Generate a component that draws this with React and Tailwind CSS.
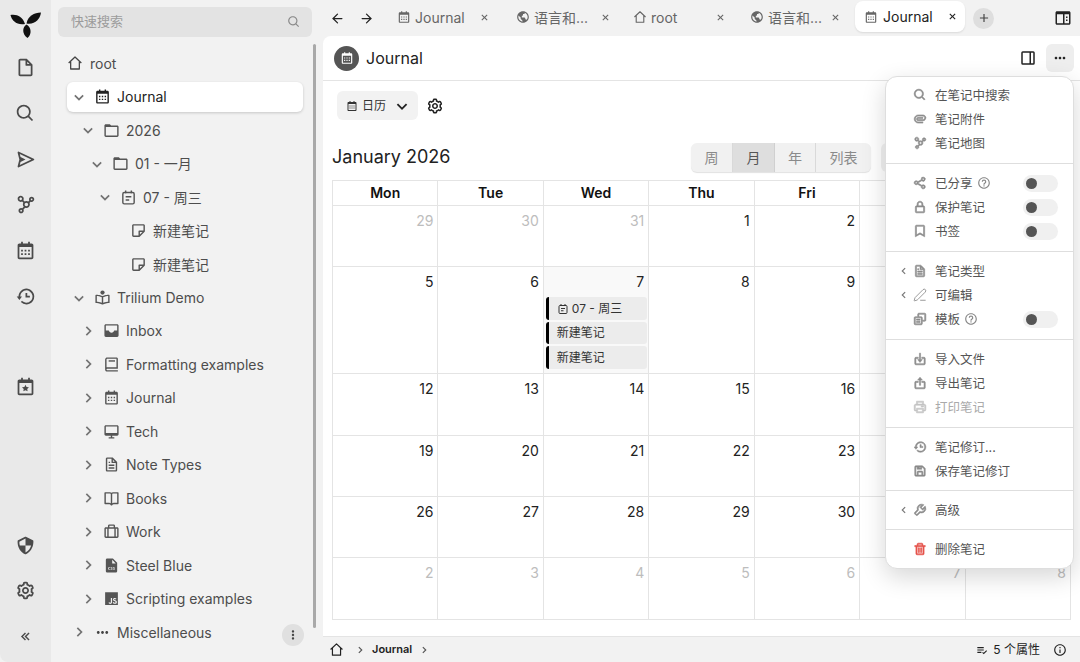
import {
  BiFile, BiSearch, BiSend, BiNetworkChart, BiCalendar, BiHistory, BiCalendarStar, BiShieldQuarter, BiCog, BiChevronsLeft,
  BiChevronDown, BiChevronRight, BiChevronLeft, BiFolder, BiNote, BiBookReader, BiSolidInbox,
  BiBook, BiDesktop, BiFileBlank, BiBookOpen, BiBriefcaseAlt, BiSolidFileCss, BiLogoJavascript, BiDotsHorizontalRounded,
  BiDotsVerticalRounded, BiWorld, BiX, BiPlus, BiSidebar, BiDockRight, BiPaperclip, BiShareAlt, BiLockAlt, BiBookmark,
  BiCopyAlt, BiImport, BiExport, BiPrinter, BiSave, BiWrench, BiTrash, BiHelpCircle, BiInfoCircle, BiListCheck,
} from "react-icons/bi";
import { ArrowLeft, ArrowRight, PenLine } from "lucide-react";

function HomeIcon({ size = 16, className = "" }) {
  return (
    <svg width={size} height={size} viewBox="0 0 24 24" fill="none" stroke="currentColor" strokeWidth="1.9" strokeLinejoin="round" className={className}>
      <path d="M2.5 12 L12 3 L21.5 12 M5.5 10 V21 H18.5 V10" />
    </svg>
  );
}

function DayIcon({ size = 16, className = "" }) {
  return (
    <svg width={size} height={size} viewBox="0 0 24 24" fill="none" stroke="currentColor" strokeWidth="2" className={className}>
      <rect x="4" y="5" width="16" height="16" rx="2" />
      <path d="M8 2 V6 M16 2 V6 M8 11 H16 M8 15.5 H13" />
    </svg>
  );
}

const railTop = [BiFileBlank, BiSearch, BiSend, BiNetworkChart, BiCalendar, BiHistory];

const tree = [
  { level: 0, open: true, icon: BiCalendar, label: "Journal", selected: true },
  { level: 1, open: true, icon: BiFolder, label: "2026" },
  { level: 2, open: true, icon: BiFolder, label: "01 - 一月" },
  { level: 3, open: true, icon: DayIcon, label: "07 - 周三" },
  { level: 4, icon: BiNote, label: "新建笔记", leaf: true },
  { level: 4, icon: BiNote, label: "新建笔记", leaf: true },
  { level: 0, open: true, icon: BiBookReader, label: "Trilium Demo" },
  { level: 1, icon: BiSolidInbox, label: "Inbox" },
  { level: 1, icon: BiBook, label: "Formatting examples" },
  { level: 1, icon: BiCalendar, label: "Journal" },
  { level: 1, icon: BiDesktop, label: "Tech" },
  { level: 1, icon: BiFile, label: "Note Types" },
  { level: 1, icon: BiBookOpen, label: "Books" },
  { level: 1, icon: BiBriefcaseAlt, label: "Work" },
  { level: 1, icon: BiSolidFileCss, label: "Steel Blue" },
  { level: 1, icon: BiLogoJavascript, label: "Scripting examples" },
];

const indents = ["pl-[4px]", "pl-[13px]", "pl-[22px]", "pl-[30px]", "pl-[56px]"];

const tabs = [
  { icon: BiCalendar, label: "Journal", cls: "w-[119px]", inner: "w-[94px]" },
  { icon: BiWorld, label: "语言和...", cls: "w-[117px]", inner: "w-[96px]" },
  { icon: HomeIcon, label: "root", cls: "w-[117px]", inner: "w-[94px]" },
  { icon: BiWorld, label: "语言和...", cls: "w-[105px]", inner: "w-[92px]" },
];

// Sat and Sun labels are hidden by the open menu
const weekdays = ["Mon", "Tue", "Wed", "Thu", "Fri", "", ""];

const days = [
  [29, 30, 31, 1, 2, 3, 4],
  [5, 6, 7, 8, 9, 10, 11],
  [12, 13, 14, 15, 16, 17, 18],
  [19, 20, 21, 22, 23, 24, 25],
  [26, 27, 28, 29, 30, 31, 1],
  [2, 3, 4, 5, 6, 7, 8],
];

const menu = [
  {
    cls: "pt-[6px] pb-[8px]",
    rows: [
      { icon: BiSearch, label: "在笔记中搜索" },
      { icon: BiPaperclip, label: "笔记附件" },
      { icon: BiNetworkChart, label: "笔记地图" },
    ],
  },
  {
    cls: "pt-[7px] pb-[8px] border-t",
    rows: [
      { icon: BiShareAlt, label: "已分享", help: true, toggle: true },
      { icon: BiLockAlt, label: "保护笔记", toggle: true },
      { icon: BiBookmark, label: "书签", toggle: true },
    ],
  },
  {
    cls: "pt-[7px] pb-[8px] border-t",
    rows: [
      { icon: BiFile, label: "笔记类型", sub: true },
      { icon: PenLine, label: "可编辑", sub: true, thin: true },
      { icon: BiCopyAlt, label: "模板", help: true, toggle: true },
    ],
  },
  {
    cls: "pt-[7px] pb-[8px] border-t",
    rows: [
      { icon: BiImport, label: "导入文件" },
      { icon: BiExport, label: "导出笔记" },
      { icon: BiPrinter, label: "打印笔记", disabled: true },
    ],
  },
  {
    cls: "py-[7px] border-t",
    rows: [
      { icon: BiHistory, label: "笔记修订..." },
      { icon: BiSave, label: "保存笔记修订" },
    ],
  },
  { cls: "py-[7px] border-t", rows: [{ icon: BiWrench, label: "高级", sub: true }] },
  { cls: "py-[7px] border-t", rows: [{ icon: BiTrash, label: "删除笔记", danger: true }] },
];

function Logo() {
  return (
    <svg width="32" height="26" viewBox="0 0 32 26" fill="#111">
      <path d="M15 12 C12.5 4.5 7 2 0.5 3 C2 9 7 13.5 15 12 Z" />
      <path d="M16.5 11.5 C18 4 24 0.5 31 0.5 C30 7.5 24.5 13 16.5 11.5 Z" />
      <path d="M16.5 12.5 C12 15.5 12 22 17.5 26 C22 22 21.5 15.5 16.5 12.5 Z" />
    </svg>
  );
}

function Rail() {
  return (
    <aside className="w-[51px] h-full shrink-0 bg-[#e9e9e9] rounded-bl-lg flex flex-col items-center pb-[3px] text-[#4a4a4a]">
      <div className="h-[45px] pt-[12px]">
        <Logo />
      </div>
      {railTop.map((Icon, idx) => (
        <div key={idx} className="h-[45.7px] flex items-center justify-center">
          <Icon size={21} />
        </div>
      ))}
      <div className="h-[45px]" />
      <div className="h-[45px] flex items-center justify-center">
        <BiCalendarStar size={21} />
      </div>
      <div className="mt-auto h-[45.5px] flex items-center justify-center">
        <BiShieldQuarter size={21} />
      </div>
      <div className="h-[45.5px] flex items-center justify-center">
        <BiCog size={21} />
      </div>
      <div className="h-[45.5px] flex items-center justify-center">
        <BiChevronsLeft size={17} />
      </div>
    </aside>
  );
}

function TreeRow({ item }) {
  const Icon = item.icon;
  const Chevron = item.open ? BiChevronDown : BiChevronRight;
  return (
    <div className="h-[33.47px] flex items-center">
      <div
        className={`w-[236px] h-[30px] flex items-center rounded-md ${indents[item.level]} ${
          item.selected ? "bg-white shadow-[0_1px_3px_rgba(0,0,0,0.18)] text-[#222]" : "text-[#4d4d4d]"
        }`}
      >
        {!item.leaf && <Chevron size={20} className="-mx-[2px] text-[#747474] shrink-0" />}
        <Icon size={17} className={`ml-[7px] shrink-0 ${item.selected ? "text-[#222]" : "text-[#555]"}`} />
        <span className="ml-[6px] text-[14px] whitespace-nowrap">{item.label}</span>
      </div>
    </div>
  );
}

function Sidebar() {
  return (
    <section className="w-[272px] h-full shrink-0 flex flex-col">
      <div className="h-[30px] w-[254px] mt-[7px] ml-[7px] rounded-md bg-[#e3e3e3] flex items-center justify-between pl-[13px] pr-[11px]">
        <span className="text-[13px] text-[#9c9c9c]">快速搜索</span>
        <BiSearch size={14} className="text-[#8a8a8a]" />
      </div>
      <div className="flex flex-1 mt-[7px]">
        <div className="w-[262px] pl-[16px] pt-[2.5px]">
          <div className="h-[33.47px] flex items-center text-[#4d4d4d]">
            <HomeIcon size={16} className="text-[#444]" />
            <span className="ml-[7px] text-[14px]">root</span>
          </div>
          {tree.map((item, idx) => (
            <TreeRow key={idx} item={item} />
          ))}
          <div className="h-[33.47px] flex items-center w-[237px] pl-[4px] text-[#4d4d4d]">
            <BiChevronRight size={20} className="-mx-[2px] text-[#747474]" />
            <BiDotsHorizontalRounded size={17} className="ml-[7px] text-[#444]" />
            <span className="ml-[6px] text-[14px]">Miscellaneous</span>
            <span className="ml-auto mt-[5px] w-[22px] h-[22px] rounded-full bg-[#e0e0e0] flex items-center justify-center text-[#444]">
              <BiDotsVerticalRounded size={14} />
            </span>
          </div>
        </div>
        <div className="w-[3px] h-[584px] rounded-full bg-[#a9a9a9]" />
      </div>
    </section>
  );
}

function TabBar() {
  return (
    <div className="h-[36px] shrink-0 flex items-center">
      <ArrowLeft size={15} strokeWidth={2} className="ml-[7px] text-[#222]" />
      <ArrowRight size={15} strokeWidth={2} className="ml-[14px] text-[#222]" />
      <div className="ml-[23px] -mt-[2px] flex items-center">
        {tabs.map((tab, idx) => {
          const Icon = tab.icon;
          return (
            <div key={idx} className={`${tab.cls} flex items-center text-[#666]`}>
              <div className={`${tab.inner} flex items-center`}>
                <Icon size={14} className="shrink-0" />
                <span className="ml-[4px] w-[65px] text-[14px] whitespace-nowrap">{tab.label}</span>
                <BiX size={13} className="ml-auto shrink-0" />
              </div>
            </div>
          );
        })}
      </div>
      <div className="w-[110px] h-[31px] -mt-[3px] rounded-lg bg-white shadow-[0_1px_2px_rgba(0,0,0,0.1)] flex items-center pl-[9px] text-[#222]">
        <BiCalendar size={14} className="text-[#666] shrink-0" />
        <span className="ml-[5px] text-[14px]">Journal</span>
        <BiX size={13} className="ml-[13px]" />
      </div>
      <div className="ml-[8px] w-[21px] h-[21px] rounded-full bg-[#dedede] flex items-center justify-center text-[#444]">
        <BiPlus size={14} />
      </div>
      <BiSidebar size={18} className="ml-[60px] -scale-x-100 text-[#222]" />
    </div>
  );
}

function Calendar() {
  return (
    <div className="mt-[8px] w-[739px] border-l border-t border-[#e4e4e4] grid grid-cols-7 grid-rows-[25px_61px_107px_62px_61px_61px_62px]">
      {weekdays.map((d, idx) => (
        <div key={idx} className="pb-[2px] border-r border-b border-[#e4e4e4] flex items-center justify-center text-[14px] font-semibold text-[#111]">
          {d}
        </div>
      ))}
      {days.map((week, w) =>
        week.map((day, i) => {
          const outside = (w === 0 && day > 20) || w === 5;
          const today = w === 1 && i === 2;
          // Sat/Sun of the first five weeks sit fully under the open menu
          const covered = w < 5 && i > 4;
          return (
            <div
              key={`${w}-${i}`}
              className={`border-r border-b border-[#e4e4e4] ${today ? "bg-[#f9f9f9]" : ""} pl-[2px] pr-[1px] pt-[5px]`}
            >
              {!covered && (
                <div className={`pr-[3px] text-right text-[14px] leading-[20px] ${outside ? "text-[#bdbdbd]" : "text-[#222]"}`}>{day}</div>
              )}
              {today && (
                <div className="mt-[5px] flex flex-col gap-[2px]">
                  <div className="h-[23px] rounded-[3px] bg-[#ececec] border-l-[3px] border-black flex items-center pl-[8px] text-[12px] text-[#333]">
                    <DayIcon size={12} />
                    <span className="ml-[3px]">07 - 周三</span>
                  </div>
                  <div className="h-[22px] rounded-[3px] bg-[#ececec] border-l-[3px] border-black flex items-center pl-[8px] text-[12px] text-[#333]">
                    新建笔记
                  </div>
                  <div className="h-[23px] rounded-[3px] bg-[#ececec] border-l-[3px] border-black flex items-center pl-[8px] text-[12px] text-[#333]">
                    新建笔记
                  </div>
                </div>
              )}
            </div>
          );
        })
      )}
    </div>
  );
}

function NotePane() {
  return (
    <div className="flex-1 min-h-0 bg-white rounded-tl-lg border-b border-[#e4e4e4]">
      <header className="h-[45px] flex items-center pl-[11px] pr-[6px] border-b border-[#e4e4e4]">
        <div className="w-[25px] h-[25px] rounded-full bg-[#555] flex items-center justify-center text-white">
          <BiCalendar size={14} />
        </div>
        <span className="ml-[7px] text-[16px] text-[#222]">Journal</span>
        <BiDockRight size={18} className="ml-auto text-[#222]" />
        <div className="ml-[9px] w-[28px] h-[28px] rounded-md bg-[#eeeeee] flex items-center justify-center text-[#222]">
          <BiDotsHorizontalRounded size={16} />
        </div>
      </header>
      <div className="pl-[9px]">
        <div className="mt-[10px] h-[29px] flex items-center pl-[5px]">
          <div className="w-[81px] h-[29px] rounded-md bg-[#f2f2f2] flex items-center pl-[9px] text-[#333]">
            <BiCalendar size={12} />
            <span className="ml-[4px] text-[12px]">日历</span>
            <BiChevronDown size={22} className="ml-[5px] text-[#222]" />
          </div>
          <BiCog size={18} className="ml-[8px] text-[#222]" />
        </div>
        <div className="mt-[23px] h-[29px] flex items-center">
          <h2 className="pb-[2px] text-[18px] text-[#222] w-[359px]">January 2026</h2>
          <div className="flex h-[29px] rounded-md bg-[#f1f1f1] shadow-[0_1px_1px_rgba(0,0,0,0.12)] text-[14px] text-[#8a8a8a]">
            <div className="w-[42px] flex items-center justify-center border-r border-[#d9d9d9]">周</div>
            <div className="w-[42px] flex items-center justify-center border-r border-[#d0d0d0] bg-[#dedede] text-[#555]">月</div>
            <div className="w-[41px] flex items-center justify-center border-r border-[#d9d9d9]">年</div>
            <div className="w-[55px] flex items-center justify-center">列表</div>
          </div>
          <div className="ml-[10px] w-[40px] h-[29px] rounded-md bg-[#f1f1f1]" />
        </div>
        <Calendar />
      </div>
    </div>
  );
}

function StatusBar() {
  return (
    <footer className="h-[25px] shrink-0 flex items-center pl-[6px] pr-[13px] text-[#222]">
      <HomeIcon size={15} />
      <BiChevronRight size={14} className="ml-[9px] text-[#555]" />
      <span className="ml-[5px] text-[11px] font-semibold">Journal</span>
      <BiChevronRight size={14} className="ml-[5px] text-[#555]" />
      <BiListCheck size={14} className="ml-auto" />
      <span className="ml-[4px] text-[12px]">5 个属性</span>
      <BiInfoCircle size={14} className="ml-[13px]" />
    </footer>
  );
}

function MenuRow({ row }) {
  const Icon = row.icon;
  let iconColor = "text-[#8c8c8c]";
  let textColor = "text-[#555]";
  if (row.disabled) {
    iconColor = "text-[#c4c4c4]";
    textColor = "text-[#aaa]";
  }
  if (row.danger) iconColor = "text-[#e5534b]";
  return (
    <div className="h-[24px] flex items-center relative pl-[27px] pr-[15px]">
      {row.sub && <BiChevronLeft size={14} className="absolute left-[11px] text-[#777]" />}
      <Icon size={14} strokeWidth={row.thin ? 1.5 : undefined} className={iconColor} />
      <span className={`ml-[8px] pt-[2px] text-[12.5px] ${textColor}`}>{row.label}</span>
      {row.help && <BiHelpCircle size={14} className="ml-[4px] text-[#888]" />}
      {row.toggle && (
        <div className="ml-auto w-[35px] h-[17px] rounded-full bg-[#f0f0f0] flex items-center pl-[3px]">
          <div className="w-[11px] h-[11px] rounded-full bg-[#555]" />
        </div>
      )}
    </div>
  );
}

function NoteMenu() {
  return (
    <div className="absolute left-[885px] top-[76px] w-[189px] h-[493px] rounded-xl bg-white border border-[#dedede] shadow-[0_8px_24px_rgba(0,0,0,0.16)]">
      {menu.map((section, idx) => (
        <div key={idx} className={`${section.cls} border-[#dedede]`}>
          {section.rows.map((row) => (
            <MenuRow key={row.label} row={row} />
          ))}
        </div>
      ))}
    </div>
  );
}

export default function App() {
  return (
    <div className="relative w-[1080px] h-[662px] overflow-hidden flex bg-[#f2f2f2] [font-family:Inter,'Noto_Sans_CJK_SC',sans-serif]">
      <Rail />
      <Sidebar />
      <main className="flex-1 min-w-0 flex flex-col">
        <TabBar />
        <NotePane />
        <StatusBar />
      </main>
      <NoteMenu />
    </div>
  );
}
